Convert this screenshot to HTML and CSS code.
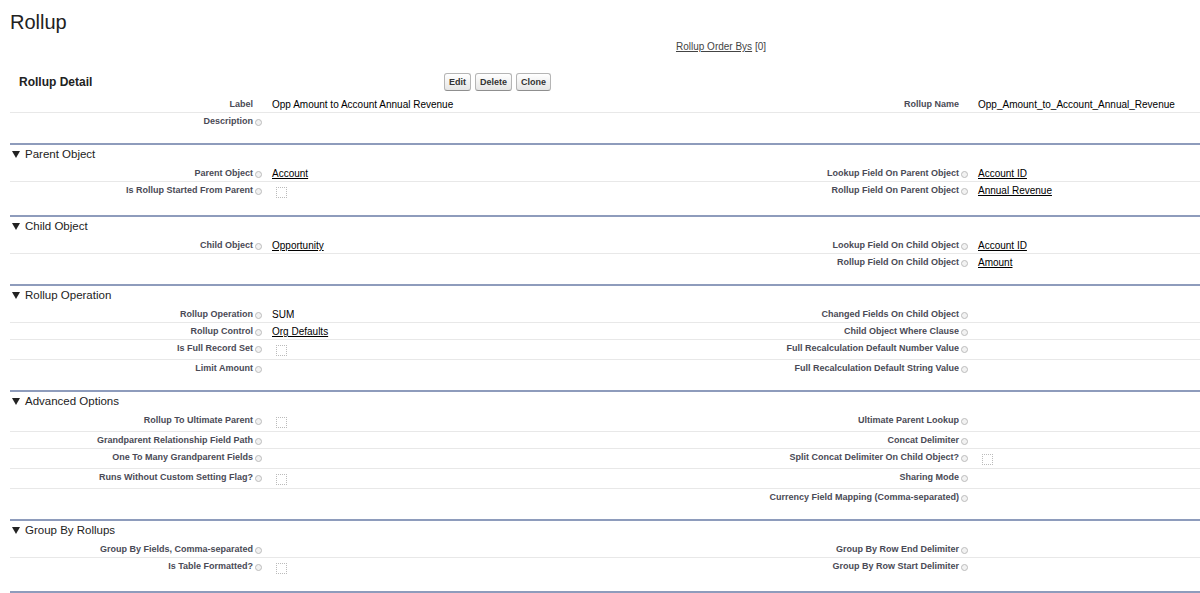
FILE: index.html
```html
<!DOCTYPE html>
<html lang="en">
<head>
    <meta charset="UTF-8">
    <title>Rollup</title>
    <link rel="stylesheet" href="styles.css">
</head>
<body>
    <div class="page">
        <h1 class="page-title">Rollup</h1>

        <div class="hover-links">
            <a href="#">Rollup Order Bys</a> <span class="count">[0]</span>
        </div>

        <div class="detail-header">
            <h2 class="detail-title">Rollup Detail</h2>
            <div class="buttons">
                <button type="button">Edit</button>
                <button type="button">Delete</button>
                <button type="button">Clone</button>
            </div>
        </div>

        <div class="section first">
            <div class="row">
                <div class="label">Label<i class="help blank"></i></div>
                <div class="data">Opp Amount to Account Annual Revenue</div>
                <div class="label">Rollup Name<i class="help blank"></i></div>
                <div class="data">Opp_Amount_to_Account_Annual_Revenue</div>
            </div>
            <div class="row">
                <div class="label">Description<i class="help"></i></div>
                <div class="data"></div>
                <div class="label"></div>
                <div class="data"></div>
            </div>
        </div>

        <div class="section">
            <div class="section-head"><span class="arrow"></span>Parent Object</div>
            <div class="row">
                <div class="label">Parent Object<i class="help"></i></div>
                <div class="data"><a href="#">Account</a></div>
                <div class="label">Lookup Field On Parent Object<i class="help"></i></div>
                <div class="data"><a href="#">Account ID</a></div>
            </div>
            <div class="row">
                <div class="label">Is Rollup Started From Parent<i class="help"></i></div>
                <div class="data"><span class="checkbox"></span></div>
                <div class="label">Rollup Field On Parent Object<i class="help"></i></div>
                <div class="data"><a href="#">Annual Revenue</a></div>
            </div>
        </div>

        <div class="section">
            <div class="section-head"><span class="arrow"></span>Child Object</div>
            <div class="row">
                <div class="label">Child Object<i class="help"></i></div>
                <div class="data"><a href="#">Opportunity</a></div>
                <div class="label">Lookup Field On Child Object<i class="help"></i></div>
                <div class="data"><a href="#">Account ID</a></div>
            </div>
            <div class="row">
                <div class="label"></div>
                <div class="data"></div>
                <div class="label">Rollup Field On Child Object<i class="help"></i></div>
                <div class="data"><a href="#">Amount</a></div>
            </div>
        </div>

        <div class="section">
            <div class="section-head"><span class="arrow"></span>Rollup Operation</div>
            <div class="row">
                <div class="label">Rollup Operation<i class="help"></i></div>
                <div class="data">SUM</div>
                <div class="label">Changed Fields On Child Object<i class="help"></i></div>
                <div class="data"></div>
            </div>
            <div class="row">
                <div class="label">Rollup Control<i class="help"></i></div>
                <div class="data"><a href="#">Org Defaults</a></div>
                <div class="label">Child Object Where Clause<i class="help"></i></div>
                <div class="data"></div>
            </div>
            <div class="row">
                <div class="label">Is Full Record Set<i class="help"></i></div>
                <div class="data"><span class="checkbox"></span></div>
                <div class="label">Full Recalculation Default Number Value<i class="help"></i></div>
                <div class="data"></div>
            </div>
            <div class="row">
                <div class="label">Limit Amount<i class="help"></i></div>
                <div class="data"></div>
                <div class="label">Full Recalculation Default String Value<i class="help"></i></div>
                <div class="data"></div>
            </div>
        </div>

        <div class="section">
            <div class="section-head"><span class="arrow"></span>Advanced Options</div>
            <div class="row">
                <div class="label">Rollup To Ultimate Parent<i class="help"></i></div>
                <div class="data"><span class="checkbox"></span></div>
                <div class="label">Ultimate Parent Lookup<i class="help"></i></div>
                <div class="data"></div>
            </div>
            <div class="row">
                <div class="label">Grandparent Relationship Field Path<i class="help"></i></div>
                <div class="data"></div>
                <div class="label">Concat Delimiter<i class="help"></i></div>
                <div class="data"></div>
            </div>
            <div class="row">
                <div class="label">One To Many Grandparent Fields<i class="help"></i></div>
                <div class="data"></div>
                <div class="label">Split Concat Delimiter On Child Object?<i class="help"></i></div>
                <div class="data"><span class="checkbox"></span></div>
            </div>
            <div class="row">
                <div class="label">Runs Without Custom Setting Flag?<i class="help"></i></div>
                <div class="data"><span class="checkbox"></span></div>
                <div class="label">Sharing Mode<i class="help"></i></div>
                <div class="data"></div>
            </div>
            <div class="row">
                <div class="label"></div>
                <div class="data"></div>
                <div class="label">Currency Field Mapping (Comma-separated)<i class="help"></i></div>
                <div class="data"></div>
            </div>
        </div>

        <div class="section">
            <div class="section-head"><span class="arrow"></span>Group By Rollups</div>
            <div class="row">
                <div class="label">Group By Fields, Comma-separated<i class="help"></i></div>
                <div class="data"></div>
                <div class="label">Group By Row End Delimiter<i class="help"></i></div>
                <div class="data"></div>
            </div>
            <div class="row">
                <div class="label">Is Table Formatted?<i class="help"></i></div>
                <div class="data"><span class="checkbox"></span></div>
                <div class="label">Group By Row Start Delimiter<i class="help"></i></div>
                <div class="data"></div>
            </div>
        </div>

        <div class="section"></div>
    </div>
</body>
</html>
```

FILE: styles.css
```css
body {
    margin: 0;
    font-family: 'Liberation Sans', Arial, sans-serif;
    background-color: #fff;
    color: #222;
    overflow: hidden;
}

.page {
    width: 1422px;
    padding: 0 10px;
}

a {
    color: #222;
    text-decoration: underline;
}

.page-title {
    margin: 10px 0 0;
    font-size: 20px;
    line-height: 25px;
    font-weight: normal;
    color: #222;
}

.hover-links {
    margin-top: 6px;
    text-align: center;
    font-size: 10px;
    line-height: 12px;
    color: #444;
}

.hover-links a {
    color: #444;
}

.detail-header {
    display: flex;
    align-items: center;
    height: 18px;
    margin-top: 20px;
}

.detail-title {
    width: 425px;
    margin: 0;
    padding-left: 9px;
    font-size: 12px;
    font-weight: bold;
    color: #222;
}

.buttons {
    display: flex;
    gap: 4px;
}

button {
    height: 18px;
    padding: 0 4px;
    font-family: inherit;
    font-size: 9px;
    font-weight: bold;
    color: #333;
    background: linear-gradient(#ffffff, #e6e6e6);
    border: 1px solid #b5b5b5;
    border-bottom-color: #8f8f8f;
    border-radius: 3px;
    cursor: pointer;
}

.section {
    border-top: 2px solid #8e9cbc;
    padding-bottom: 14px;
}

.section.first {
    border-top: none;
    margin-top: 5px;
}

.section-head {
    display: flex;
    align-items: center;
    padding: 3px 0 4px 2px;
    font-size: 11.5px;
    line-height: 13px;
    color: #222;
}

.arrow {
    width: 0;
    height: 0;
    margin-right: 5px;
    border-left: 4px solid transparent;
    border-right: 4px solid transparent;
    border-top: 7px solid #222;
}

.row {
    display: grid;
    grid-template-columns: 255px 451px 255px 1fr;
    padding: 3px 0 2px;
    line-height: 11px;
    border-bottom: 1px solid #e8e8e8;
}

.row:last-child {
    border-bottom: none;
}

.label {
    display: flex;
    justify-content: flex-end;
    align-items: flex-start;
    padding-right: 3px;
    font-size: 9px;
    font-weight: bold;
    color: #4a4a56;
}

.data {
    padding-left: 7px;
    font-size: 10px;
    color: #000;
}

.data a {
    color: #000;
}

.help {
    display: inline-block;
    width: 5px;
    height: 5px;
    margin: 3px 0 0 2px;
    border: 1px solid #bcbcbc;
    border-radius: 50%;
    background-color: #f2f2f2;
}

.help.blank {
    visibility: hidden;
}

.checkbox {
    display: block;
    width: 11px;
    height: 11px;
    margin: 2px 0 1px 4px;
    box-sizing: border-box;
    border: 1px dotted #bbb;
    background-color: #fff;
}
```
